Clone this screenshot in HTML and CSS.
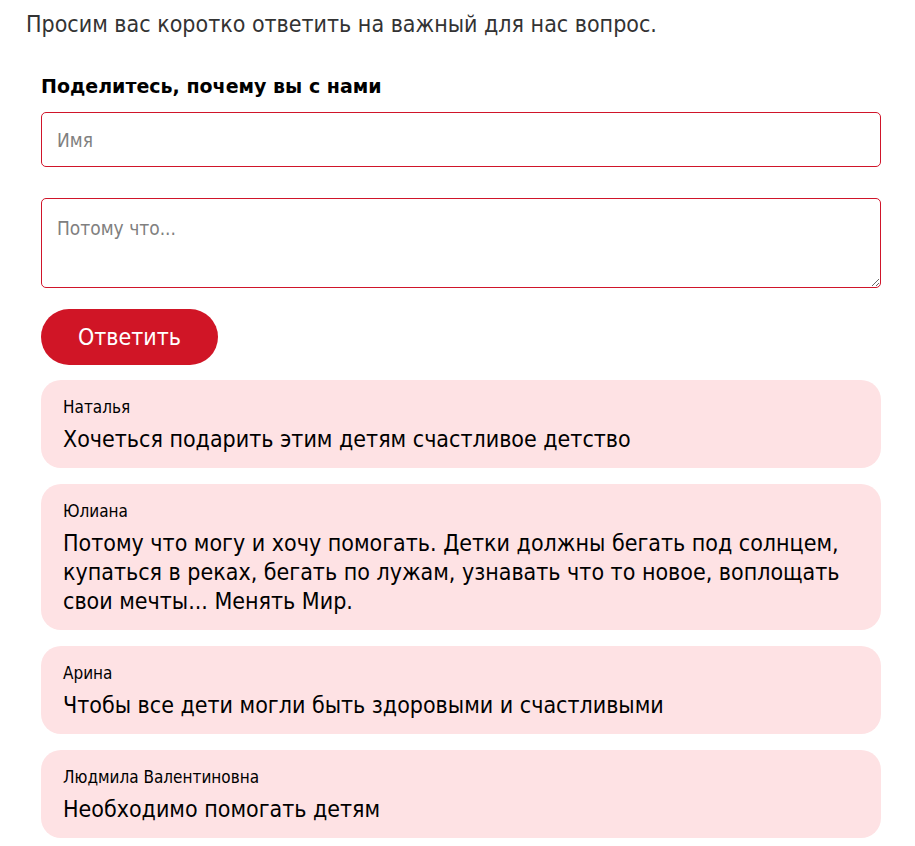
FILE: index.html
```html
<!DOCTYPE html>
<html lang="ru">
<head>
  <meta charset="UTF-8" />
  <meta name="viewport" content="width=device-width, initial-scale=1.0" />
  <title>Почему вы с нами</title>
  <link rel="stylesheet" href="styles.css">
</head>
<body>
  <p class="intro">Просим вас коротко ответить на важный для нас вопрос.</p>

  <section class="section">
    <h2>Поделитесь, почему вы с нами</h2>
    <form class="answer-form">
      <input type="text" placeholder="Имя">
      <textarea placeholder="Потому что..."></textarea>
      <button type="button" class="button">Ответить</button>
    </form>

    <div class="answers">
      <div class="answer">
        <p class="answer-name">Наталья</p>
        <p class="answer-text">Хочеться подарить этим детям счастливое детство</p>
      </div>
      <div class="answer">
        <p class="answer-name">Юлиана</p>
        <p class="answer-text">Потому что могу и хочу помогать. Детки должны бегать под солнцем, купаться в реках, бегать по лужам, узнавать что то новое, воплощать свои мечты... Менять Мир.</p>
      </div>
      <div class="answer">
        <p class="answer-name">Арина</p>
        <p class="answer-text">Чтобы все дети могли быть здоровыми и счастливыми</p>
      </div>
      <div class="answer">
        <p class="answer-name">Людмила Валентиновна</p>
        <p class="answer-text">Необходимо помогать детям</p>
      </div>
    </div>
  </section>
</body>
</html>
```

FILE: styles.css
```css
body {
  margin: 0;
  font-family: Tahoma, 'DejaVu Sans Condensed', 'DejaVu Sans', sans-serif;
  background-color: #fff;
  color: #000;
}
.intro {
  margin: 0;
  padding: 9px 26px 0;
  font-size: 23px;
  line-height: 30px;
  color: #333;
}
.section {
  padding: 36px 34px 0 41px;
}
.section h2 {
  margin: 0 0 15px;
  font-family: Tahoma, 'DejaVu Sans', sans-serif;
  font-size: 19px;
  line-height: 22px;
  font-weight: bold;
}
.answer-form {
  display: flex;
  flex-direction: column;
  align-items: flex-start;
}
.answer-form input,
.answer-form textarea {
  box-sizing: border-box;
  width: 100%;
  border: 1px solid #d0152a;
  border-radius: 5px;
  padding: 0 15px;
  font-family: inherit;
  font-size: 19px;
  color: #333;
  outline: none;
}
.answer-form input {
  height: 55px;
  margin-bottom: 31px;
}
.answer-form textarea {
  height: 90px;
  padding-top: 18px;
  margin-bottom: 21px;
  resize: vertical;
}
.answer-form ::placeholder {
  color: #808080;
}
.button {
  display: inline-block;
  background-color: #d01526;
  color: white;
  border: none;
  height: 56px;
  padding: 0 37px;
  border-radius: 28px;
  font-family: inherit;
  font-size: 23px;
}
.answers {
  display: flex;
  flex-direction: column;
  gap: 16px;
  margin-top: 15px;
}
.answer {
  background-color: #fee2e4;
  border-radius: 20px;
  padding: 17px 22px 14px;
}
.answer-name {
  margin: 0 0 8px;
  font-size: 17px;
  line-height: 20px;
}
.answer-text {
  margin: 0;
  font-size: 23px;
  line-height: 29px;
}
```
